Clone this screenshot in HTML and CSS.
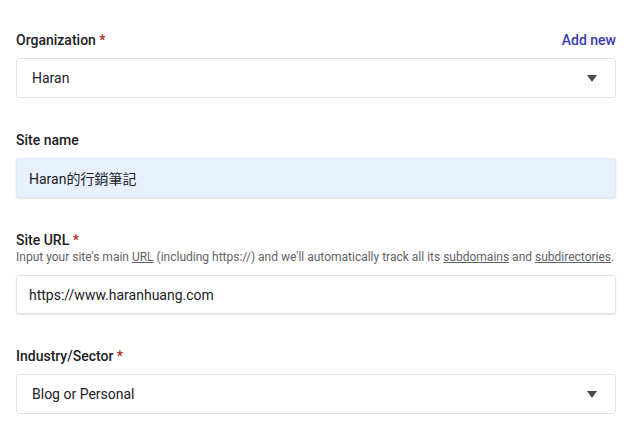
FILE: index.html
```html
<!DOCTYPE html>
<html>
<head>
<meta charset="utf-8">
<link rel="stylesheet" href="styles.css">
</head>
<body>
<form class="form">
  <div class="field">
    <div class="label-row">
      <label class="label">Organization <span class="req">*</span></label>
      <a class="add-new">Add new</a>
    </div>
    <div class="box select">
      <span class="value">Haran</span>
      <span class="arrow"></span>
    </div>
  </div>

  <div class="field">
    <div class="label-row">
      <label class="label">Site name</label>
    </div>
    <div class="box filled">
      <span class="value">Haran的行銷筆記</span>
    </div>
  </div>

  <div class="field">
    <div class="label-row">
      <label class="label">Site URL <span class="req">*</span></label>
    </div>
    <div class="help">Input your site's main <u>URL</u> (including https://) and we'll automatically track all its <u>subdomains</u> and <u>subdirectories</u>.</div>
    <div class="box text">
      <span class="value">https://www.haranhuang.com</span>
    </div>
  </div>

  <div class="field">
    <div class="label-row">
      <label class="label">Industry/Sector <span class="req">*</span></label>
    </div>
    <div class="box select">
      <span class="value">Blog or Personal</span>
      <span class="arrow"></span>
    </div>
  </div>
</form>
</body>
</html>
```

FILE: styles.css
```css
html, body {
  margin: 0;
  padding: 0;
  background: #ffffff;
}
body {
  font-family: Roboto, "Noto Sans CJK TC", "Liberation Sans", sans-serif;
  color: #202124;
}
.form {
  display: flex;
  flex-direction: column;
  gap: 33px;
  padding: 31px 22px 0 16px;
}
.field {
  display: flex;
  flex-direction: column;
}
.label-row {
  display: flex;
  justify-content: space-between;
  align-items: center;
  height: 18px;
  margin-bottom: 9px;
}
.label {
  font-size: 14px;
  font-weight: 500;
  color: #202124;
}
.req {
  color: #b3261e;
}
.add-new {
  font-size: 14px;
  font-weight: 500;
  color: #3a3ab3;
}
.help {
  font-size: 12px;
  color: #5f6368;
  line-height: 16px;
  margin-top: -9px;
  margin-bottom: 10px;
  white-space: nowrap;
}
.help u {
  text-decoration-color: #5f6368;
}
.box {
  box-sizing: border-box;
  height: 40px;
  border: 1px solid #e2e2e2;
  border-radius: 3px;
  display: flex;
  align-items: center;
  justify-content: space-between;
  padding: 0 18px 0 15px;
  background: #fff;
}
.value {
  font-size: 14px;
  color: #202124;
}
.filled {
  background: #e8f0fe;
  border-color: #e3e8f2;
  box-shadow: 0 1px 2px rgba(0,0,0,0.12);
  padding-left: 12px;
}
.text {
  padding-left: 12px;
  box-shadow: 0 1px 2px rgba(0,0,0,0.10);
  height: 39px;
}
.arrow {
  width: 0;
  height: 0;
  border-left: 5px solid transparent;
  border-right: 5px solid transparent;
  border-top: 7px solid #4a4a4a;
}
```
